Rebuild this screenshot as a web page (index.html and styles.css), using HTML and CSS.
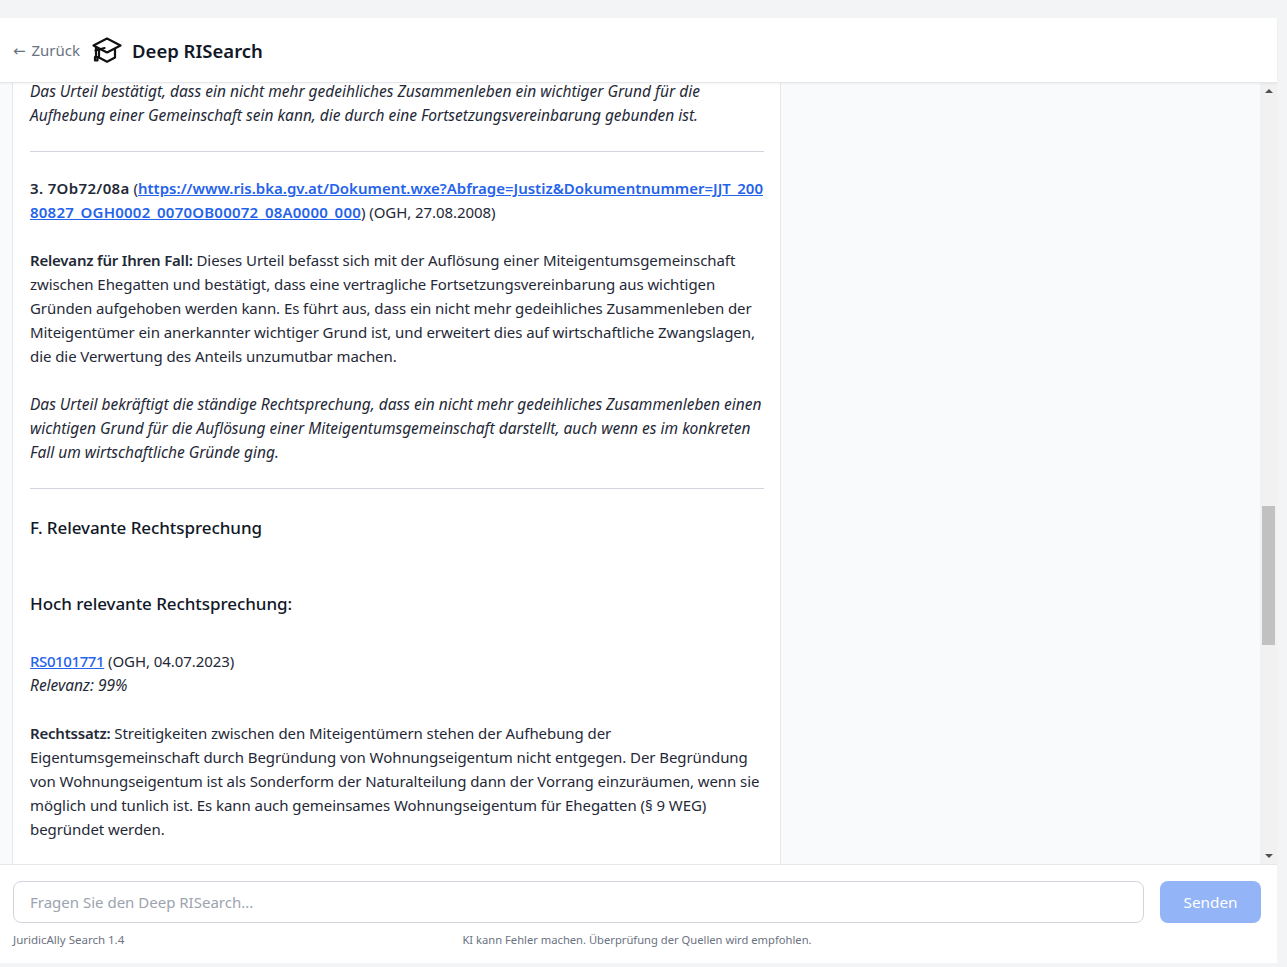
FILE: index.html
```html
<!DOCTYPE html>
<html lang="de">
<head>
    <meta charset="UTF-8">
    <title>Deep RISearch</title>
    <link rel="stylesheet" href="styles.css">
</head>
<body>
    <div class="app">
        <header class="topbar">
            <a class="back" href="#"><span class="back-arrow">←</span> Zurück</a>
            <svg class="logo" width="30" height="26" viewBox="0 0 30 26" fill="none" stroke="#111" stroke-width="2.2" stroke-linejoin="round" stroke-linecap="round">
                <path d="M1.5 8.5 15 1.5 28.5 8.5 15 15.5Z"/>
                <path d="M7 12v8.5l8 4.2 8-4.2V12"/>
                <path d="M4 10.5v9.5"/>
                <path d="M3.5 13.5l9-2.5"/>
                <path d="M3 20h2.5v3.5h-2.5z"/>
            </svg>
            <h1>Deep RISearch</h1>
        </header>

        <div class="main">
            <div class="gutter"></div>
            <article class="doc">
                <p class="em"><span class="top-line">Das Urteil bestätigt, dass ein nicht mehr gedeihliches Zusammenleben ein wichtiger Grund für die</span>Aufhebung einer Gemeinschaft sein kann, die durch eine Fortsetzungsvereinbarung gebunden ist.</p>
                <hr>
                <p><b class="num">3. 7Ob72/08a</b> (<a class="strong" href="#">https://www.ris.bka.gv.at/Dokument.wxe?Abfrage=Justiz&amp;Dokumentnummer=JJT_200<br><span class="tail">80827_OGH0002_0070OB00072_08A0000_000</span></a>) (OGH, 27.08.2008)</p>
                <p><b>Relevanz für Ihren Fall:</b> Dieses Urteil befasst sich mit der Auflösung einer Miteigentumsgemeinschaft<br>zwischen Ehegatten und bestätigt, dass eine vertragliche Fortsetzungsvereinbarung aus wichtigen<br>Gründen aufgehoben werden kann. Es führt aus, dass ein nicht mehr gedeihliches Zusammenleben der<br>Miteigentümer ein anerkannter wichtiger Grund ist, und erweitert dies auf wirtschaftliche Zwangslagen,<br>die die Verwertung des Anteils unzumutbar machen.</p>
                <p class="em">Das Urteil bekräftigt die ständige Rechtsprechung, dass ein nicht mehr gedeihliches Zusammenleben einen<br>wichtigen Grund für die Auflösung einer Miteigentumsgemeinschaft darstellt, auch wenn es im konkreten<br>Fall um wirtschaftliche Gründe ging.</p>
                <hr>
                <h2>F. Relevante Rechtsprechung</h2>
                <h3>Hoch relevante Rechtsprechung:</h3>
                <p><a class="code" href="#">RS0101771</a> (OGH, 04.07.2023)<br><i>Relevanz: 99%</i></p>
                <p><b>Rechtssatz:</b> Streitigkeiten zwischen den Miteigentümern stehen der Aufhebung der<br>Eigentumsgemeinschaft durch Begründung von Wohnungseigentum nicht entgegen. Der Begründung<br>von Wohnungseigentum ist als Sonderform der Naturalteilung dann der Vorrang einzuräumen, wenn sie<br>möglich und tunlich ist. Es kann auch gemeinsames Wohnungseigentum für Ehegatten (§ 9 WEG)<br>begründet werden.</p>
            </article>
            <aside class="side"></aside>
            <div class="scrollbar">
                <span class="arrow up"></span>
                <div class="track"><div class="thumb"></div></div>
                <span class="arrow down"></span>
            </div>
        </div>

        <footer class="composer">
            <div class="input-row">
                <input type="text" placeholder="Fragen Sie den Deep RISearch...">
                <button disabled>Senden</button>
            </div>
            <div class="meta">
                <span class="version">JuridicAlly Search 1.4</span>
                <span class="note">KI kann Fehler machen. Überprüfung der Quellen wird empfohlen.</span>
            </div>
        </footer>
    </div>
</body>
</html>
```

FILE: styles.css
```css
* {
    box-sizing: border-box;
}
body {
    margin: 0;
    height: 967px;
    overflow: hidden;
    background-color: #f3f4f6;
    font-family: "Noto Sans", sans-serif;
    color: #1f2937;
    padding: 18px 10px 4px 0;
}
.app {
    height: 945px;
    display: flex;
    flex-direction: column;
    background: #fff;
}
.topbar {
    height: 65px;
    flex: none;
    display: flex;
    align-items: center;
    padding-left: 13px;
    background: #fff;
    border-bottom: 1px solid #e5e7eb;
    box-shadow: 0 1px 2px rgba(0, 0, 0, 0.05);
    position: relative;
}
.back {
    color: #6b7280;
    font-size: 15px;
    text-decoration: none;
}
.back-arrow {
    font-family: "DejaVu Sans", sans-serif;
    font-size: 15px;
    margin-right: 2px;
}
.logo {
    margin-left: 12px;
}
h1 {
    margin: 1px 0 0 10px;
    font-size: 18.5px;
    font-weight: 600;
    color: #111827;
}
.main {
    flex: 1;
    min-height: 0;
    display: flex;
    background: #f9fafb;
}
.gutter {
    width: 13px;
    flex: none;
    border-right: 1px solid #e5e7eb;
}
.doc {
    width: 768px;
    flex: none;
    background: #fff;
    border-right: 1px solid #e5e7eb;
    padding: 0 16px 0 17px;
    font-size: 15px;
    letter-spacing: -0.07px;
    line-height: 24px;
    white-space: nowrap;
    color: #1f2937;
}
.doc p {
    margin: 0 0 24px;
}
.top-line {
    display: block;
    line-height: 16px;
    margin-bottom: 4px;
}
.doc b {
    font-weight: 600;
    letter-spacing: -0.2px;
}
.doc b.num {
    letter-spacing: 0.35px;
}
.em, .doc i {
    font-style: italic;
    font-size: 15.5px;
    letter-spacing: 0;
}
.doc a {
    color: #2563eb;
    text-decoration: underline;
}
.doc a.strong {
    font-weight: 600;
    letter-spacing: 0;
}
.tail {
    letter-spacing: 0.22px;
}
.doc a.code {
    font-weight: 500;
    letter-spacing: -0.4px;
}
hr {
    border: 0;
    border-top: 1px solid #d1d5db;
    margin: 24px 0;
}
h2 {
    margin: 0 0 46px;
    font-size: 17px;
    line-height: 30px;
    font-weight: 500;
    color: #111827;
}
h3 {
    margin: 0 0 30px;
    font-size: 17px;
    line-height: 30px;
    font-weight: 500;
    color: #111827;
}
.side {
    flex: 1;
}
.scrollbar {
    width: 17px;
    flex: none;
    background: #f1f1f1;
    display: flex;
    flex-direction: column;
    align-items: center;
}
.arrow {
    flex: none;
    width: 0;
    height: 0;
    margin: 6px 0;
    border-left: 4px solid transparent;
    border-right: 4px solid transparent;
}
.up {
    border-bottom: 4px solid #505050;
}
.down {
    border-top: 4px solid #505050;
}
.track {
    flex: 1;
    width: 100%;
    padding: 407px 2px 0;
}
.thumb {
    height: 139px;
    background: #c1c1c1;
}
.composer {
    flex: none;
    height: 99px;
    background: #fff;
    border-top: 1px solid #e5e7eb;
    padding: 16px 16px 0 13px;
}
.input-row {
    display: flex;
    gap: 16px;
}
input {
    flex: 1;
    height: 42px;
    border: 1px solid #d1d5db;
    border-radius: 8px;
    padding: 0 16px;
    font: inherit;
    font-size: 15px;
    color: #1f2937;
    background: #fff;
}
input::placeholder {
    color: #9ca3af;
}
button {
    width: 101px;
    height: 42px;
    border: none;
    border-radius: 8px;
    background: #93b4f6;
    color: #fff;
    font: inherit;
    font-size: 15.3px;
}
.meta {
    position: relative;
    margin-top: 8px;
    font-size: 11.2px;
    line-height: 18px;
    color: #6b7280;
    text-align: center;
}
.version {
    position: absolute;
    left: 0;
    top: 0;
    font-size: 11.5px;
}
```
